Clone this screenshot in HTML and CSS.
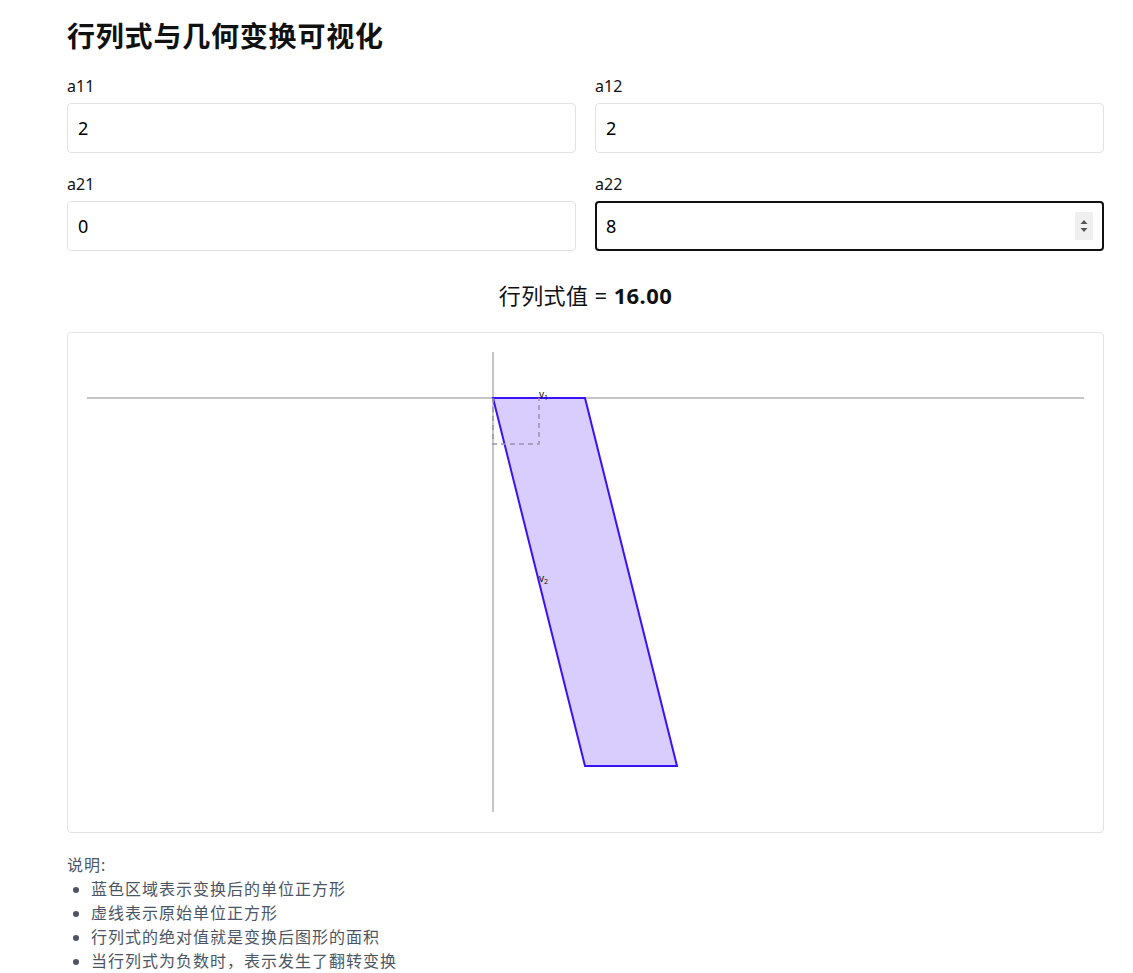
FILE: index.html
```html
<!DOCTYPE html>
<html lang="zh-CN">
<head>
    <meta charset="UTF-8">
    <meta name="viewport" content="width=device-width, initial-scale=1.0">
    <title>行列式与几何变换可视化</title>
    <link rel="stylesheet" href="styles.css">
</head>
<body>
    <div class="container">
        <h1>行列式与几何变换可视化</h1>

        <div class="matrix">
            <div class="field">
                <label for="a11">a11</label>
                <input id="a11" class="cell" type="text" value="2">
            </div>
            <div class="field">
                <label for="a12">a12</label>
                <input id="a12" class="cell" type="text" value="2">
            </div>
            <div class="field">
                <label for="a21">a21</label>
                <input id="a21" class="cell" type="text" value="0">
            </div>
            <div class="field">
                <label for="a22">a22</label>
                <div class="cell-wrap">
                    <input id="a22" class="cell cell-active" type="text" value="8">
                    <span class="spinner">
                        <svg width="18" height="28" viewBox="0 0 18 28">
                            <path d="M5.5 12 L9 8 L12.5 12 Z" fill="#555"/>
                            <path d="M5.5 16 L9 20 L12.5 16 Z" fill="#555"/>
                        </svg>
                    </span>
                </div>
            </div>
        </div>

        <p class="det">行列式值 = <strong>16.00</strong></p>

        <div class="plot">
            <svg width="997" height="460" viewBox="0 0 997 460">
                <!-- eixos: origem em (406, 46) -->
                <line x1="0" y1="46" x2="997" y2="46" stroke="#b3b3b3" stroke-width="1.5"/>
                <line x1="406" y1="0" x2="406" y2="460" stroke="#b3b3b3" stroke-width="1.5"/>
                <polygon points="406,46 498,46 590,414 498,414" fill="#d8cdfc" stroke="#3a10f5" stroke-width="2"/>
                <polyline points="406,46 406,92 452,92 452,46" fill="none" stroke="#9a93b0" stroke-width="1.5" stroke-dasharray="5,4"/>
                <text x="452" y="46" class="vec">v<tspan dy="2" font-size="7">1</tspan></text>
                <text x="452" y="230" class="vec">v<tspan dy="2" font-size="7">2</tspan></text>
            </svg>
        </div>

        <div class="notes">
            <p>说明:</p>
            <ul>
                <li>蓝色区域表示变换后的单位正方形</li>
                <li>虚线表示原始单位正方形</li>
                <li>行列式的绝对值就是变换后图形的面积</li>
                <li>当行列式为负数时，表示发生了翻转变换</li>
            </ul>
        </div>
    </div>
</body>
</html>
```

FILE: styles.css
```css
* {
    margin: 0;
    padding: 0;
    box-sizing: border-box;
}

body {
    background: #fff;
    color: #111;
    font-family: "Noto Sans", "Noto Sans CJK SC", sans-serif;
}

.container {
    width: 1037px;
    margin-left: 67px;
    padding-top: 15px;
}

h1 {
    font-size: 28px;
    font-weight: 700;
    letter-spacing: 0.8px;
    line-height: 42px;
    margin-bottom: 18px;
}

.matrix {
    display: grid;
    grid-template-columns: 1fr 1fr;
    column-gap: 19px;
    row-gap: 20px;
}

.field label {
    display: block;
    font-size: 16px;
    line-height: 22px;
    margin-bottom: 6px;
}

.cell-wrap {
    position: relative;
}

.cell {
    display: block;
    width: 100%;
    height: 50px;
    padding: 0 10px;
    border: 1px solid #e2e2e2;
    border-radius: 4px;
    font-family: "Noto Sans", sans-serif;
    font-size: 18px;
    color: #000;
    outline: none;
}

.cell-active {
    border: 2px solid #111;
    padding: 0 9px;
}

.spinner {
    position: absolute;
    right: 11px;
    top: 11px;
    width: 18px;
    height: 28px;
    background: #efefef;
}

.spinner svg {
    display: block;
}

.det {
    text-align: center;
    font-size: 22px;
    letter-spacing: 0.4px;
    line-height: 28px;
    margin-top: 30px;
    margin-bottom: 23px;
}

.det strong {
    font-weight: 700;
}

.plot {
    border: 1px solid #e3e3e3;
    border-radius: 4px;
    padding: 19px;
    height: 501px;
}

.plot svg {
    display: block;
}

.vec {
    font-size: 10px;
    font-family: "Noto Sans", sans-serif;
    fill: #111;
}

.notes {
    margin-top: 20px;
    color: #4b5563;
    font-size: 16px;
    letter-spacing: 1px;
    line-height: 24px;
}

.notes ul {
    padding-left: 24px;
}
```
